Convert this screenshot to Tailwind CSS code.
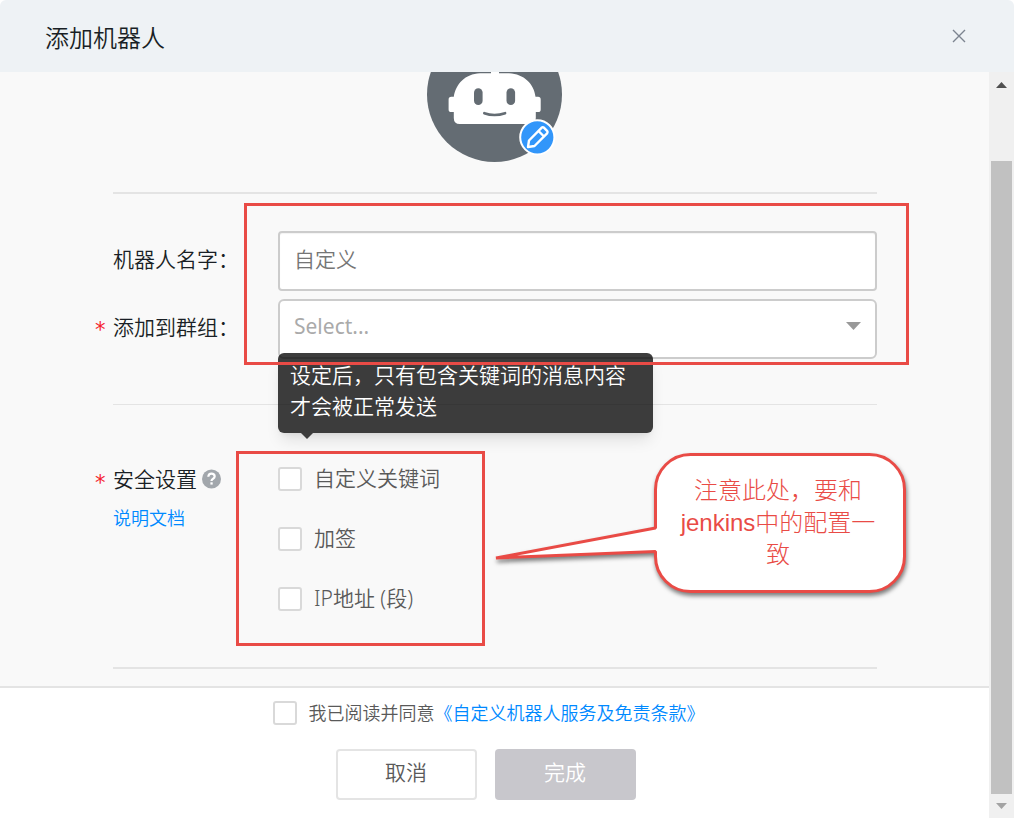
<!DOCTYPE html>
<html lang="zh-CN">
<head>
    <meta charset="UTF-8">
    <meta name="viewport" content="width=device-width, initial-scale=1.0">
    <title>添加机器人</title>
    <script src="https://cdn.jsdelivr.net/npm/@tailwindcss/browser@4"></script>
</head>
<body class="bg-white font-['Noto_Sans','Noto_Sans_CJK_SC',sans-serif] font-[350] text-[#191f25]">
    <div class="min-h-screen flex flex-col rounded-t-md overflow-hidden">
        <header class="h-18 shrink-0 bg-[#eef2f5] pl-[45px] pr-12 flex items-center justify-between">
            <h1 class="text-2xl pt-[3px]">添加机器人</h1>
            <button type="button" aria-label="关闭" class="text-[#7c8490] p-0">
                <svg class="w-[14px] h-[14px]" viewBox="0 0 14 14" fill="none" stroke="currentColor" stroke-width="1.4"><path d="M1 1l12 12M13 1L1 13"/></svg>
            </button>
        </header>

        <div class="flex-1 flex">
            <form class="flex-1 flex flex-col">
                <div class="bg-[#f9f9f9] pl-[113px] pr-28 pb-[17px] border-b-2 border-[#e4e4e4]">
                    <!-- avatar -->
                    <div class="flex justify-center pr-[2px] pb-[30px] border-b-2 border-[#e4e4e4]">
                        <svg class="w-[135px] h-[90px]" viewBox="0 0 135 90">
                            <circle cx="67.5" cy="22.5" r="67.5" fill="#646c73"/>
                            <path fill="#fff" d="M64 0h8v1.3h10C97 2 107 12 108.500 24.700h2.500q2.700 0 2.700 2.700v10q0 2.700-2.700 2.700h-2.200v6q0 6-6 6H32.800q-6 0-6-6v-6h-2.500q-2.700 0-2.700-2.700v-10q0-2.700 2.700-2.700h2.500C29 12 38 2 53 1.300h11z"/>
                            <rect x="47" y="16.300" width="8.600" height="16.700" rx="4.300" fill="#646c73"/>
                            <rect x="79.500" y="16.300" width="8.600" height="16.700" rx="4.300" fill="#646c73"/>
                            <path d="M57.300 41.200q10 3.600 20.800 0" fill="none" stroke="#646c73" stroke-width="2.600" stroke-linecap="round"/>
                            <circle cx="110.300" cy="65.300" r="17.100" fill="#3296fa" stroke="#fff" stroke-width="2"/>
                            <g fill="none" stroke="#fff" stroke-width="2.400" stroke-linejoin="round">
                                <path d="M101 75l1-6.500 12.500-12.700q1.300-1 2.600 0l3 3q1 1.300 0 2.600L107.500 74z"/>
                                <path d="M111.500 59l5.500 5.500"/>
                            </g>
                        </svg>
                    </div>

                    <div class="pt-[37px] pb-[45px] border-b border-[#e4e4e4]">
                        <div class="relative flex flex-col gap-2 text-[21px]">
                            <div class="flex items-center">
                                <label for="name" class="w-[165px] pb-[2px]">机器人名字：</label>
                                <input type="text" id="name" placeholder="自定义" class="flex-1 min-w-0 h-15 bg-white border-2 border-[#ccc] rounded-[4px] px-[14px] pb-1 placeholder:text-[#757575] inset-shadow-xs">
                            </div>
                            <div class="relative flex items-center">
                                <span class="absolute -left-[18px] pt-1 font-['DejaVu_Sans',sans-serif] font-normal text-[#f5222d]">*</span>
                                <label for="group" class="w-[165px] pb-[2px]">添加到群组：</label>
                                <select id="group" class="flex-1 min-w-0 h-15 appearance-none bg-white border-2 border-[#ccc] rounded-md px-[14px] pb-1 font-normal text-[#aaa]">
                                    <option>Select...</option>
                                </select>
                                <svg class="absolute right-4 top-[23px] w-[15px] h-2 pointer-events-none" viewBox="0 0 15 8"><path d="M0 0h15L7.500 8z" fill="#999"/></svg>
                            </div>
                            <div class="absolute z-20 left-[131px] -right-8 -top-7 -bottom-[6px] border-3 border-[#e94b46] pointer-events-none"></div>
                        </div>
                    </div>

                    <div class="relative flex pt-[62px] pb-14 border-b-2 border-[#e4e4e4]">
                        <div class="w-[165px] relative">
                            <span class="absolute -left-[18px] top-0 pt-1 text-[21px] leading-6 font-['DejaVu_Sans',sans-serif] font-normal text-[#f5222d]">*</span>
                            <div class="flex items-center gap-1 text-[21px] leading-6">
                                <span>安全设置</span>
                                <svg class="w-5 h-5" viewBox="0 0 20 20"><circle cx="10.500" cy="10" r="9.500" fill="#a2a7ac"/><path d="M7.300 7.800q.2-3.200 3.200-3.200t3.200 2.700q0 1.600-1.600 2.500t-1.600 2.200" fill="none" stroke="#fff" stroke-width="2.200"/><rect x="9.400" y="13.300" width="2.300" height="2.300" fill="#fff"/></svg>
                            </div>
                            <a href="#" class="block mt-[15px] text-lg leading-6 text-[#0089ff]">说明文档</a>
                        </div>
                        <div class="relative flex flex-col items-start gap-9 text-[21px] leading-6 text-[#595959]">
                            <label class="flex items-center gap-3 h-6"><input type="checkbox" class="appearance-none w-6 h-6 bg-white border-2 border-[#d9d9d9] rounded-[3px] checked:bg-[#0089ff]"><span class="pb-[2px]">自定义关键词</span></label>
                            <label class="flex items-center gap-3 h-6"><input type="checkbox" class="appearance-none w-6 h-6 bg-white border-2 border-[#d9d9d9] rounded-[3px] checked:bg-[#0089ff]"><span class="pb-[2px]">加签</span></label>
                            <label class="flex items-center gap-3 h-6"><input type="checkbox" class="appearance-none w-6 h-6 bg-white border-2 border-[#d9d9d9] rounded-[3px] checked:bg-[#0089ff]"><span class="pb-[2px]">IP地址 (段)</span></label>
                            <div class="absolute -left-[42px] -right-[45px] -top-4 -bottom-[35px] border-3 border-[#e94b46] pointer-events-none"></div>

                            <!-- tooltip -->
                            <div role="tooltip" class="absolute z-10 left-0 bottom-[178px] w-[375px] h-20 px-3 pt-[7px] rounded-md bg-black/76 text-white leading-[31px] shadow-lg">
                                设定后，只有包含关键词的消息内容才会被正常发送
                                <svg class="absolute left-[23px] top-full w-3 h-[6px]" viewBox="0 0 12 6"><path d="M0 0h12L6 6z" fill="#3d3d3d"/></svg>
                            </div>
                        </div>

                        <!-- callout -->
                        <div class="absolute -right-[29px] top-12 w-[252px] h-[141px]">
                            <svg class="absolute right-0 top-0 w-[412px] h-[141px] overflow-visible drop-shadow-[1px_3px_2px_rgba(0,0,0,0.5)]" viewBox="0 0 412 141">
                                <path d="M196.500 1.500h179a35 35 0 0 1 35 35v67a35 35 0 0 1-35 35H196.500a35 35 0 0 1-35-35V98.500L2 105l159.500-30V36.500a35 35 0 0 1 35-35z" fill="#fff" stroke="#e94b46" stroke-width="3" stroke-linejoin="bevel"/>
                            </svg>
                            <p class="relative pl-5 pr-6 pt-[22px] text-center text-2xl leading-8 font-light text-[#e94b46] font-['Liberation_Sans','Noto_Sans_CJK_SC',sans-serif]">注意此处，要和jenkins中的配置一致</p>
                        </div>
                    </div>
                </div>

                <footer class="flex-1 bg-white pt-[13px] pr-3 pb-[18px]">
                    <div class="flex justify-center items-center text-lg leading-6 text-[#595959]">
                        <label class="flex items-center gap-3"><input type="checkbox" class="appearance-none w-6 h-6 bg-white border-2 border-[#d9d9d9] rounded-[3px] checked:bg-[#0089ff]">我已阅读并同意</label>
                        <a href="#" class="text-[#0089ff]">《自定义机器人服务及免责条款》</a>
                    </div>
                    <div class="mt-6 pr-[6px] flex justify-center gap-[18px] text-[21px]">
                        <button type="button" class="w-[141px] h-[51px] pb-1 bg-white border-2 border-[#e4e4e4] rounded-[4px] text-[#595959]">取消</button>
                        <button type="submit" class="w-[141px] h-[51px] pb-1 bg-[#c8c7cc] rounded-[4px] text-white">完成</button>
                    </div>
                </footer>
            </form>

            <!-- scrollbar -->
            <div class="w-[25px] bg-[#f0f0f0] px-[2px] flex flex-col items-center">
                <svg class="mt-[10px] mb-[73px] w-[11px] h-[6px] shrink-0" viewBox="0 0 11 6"><path d="M0 6h11L5.500 0z" fill="#505050"/></svg>
                <div class="flex-1 w-full bg-[#c1c1c1]"></div>
                <svg class="my-[9px] w-[11px] h-[6px] shrink-0" viewBox="0 0 11 6"><path d="M0 0h11L5.500 6z" fill="#a3a3a3"/></svg>
            </div>
        </div>
    </div>
</body>
</html>
